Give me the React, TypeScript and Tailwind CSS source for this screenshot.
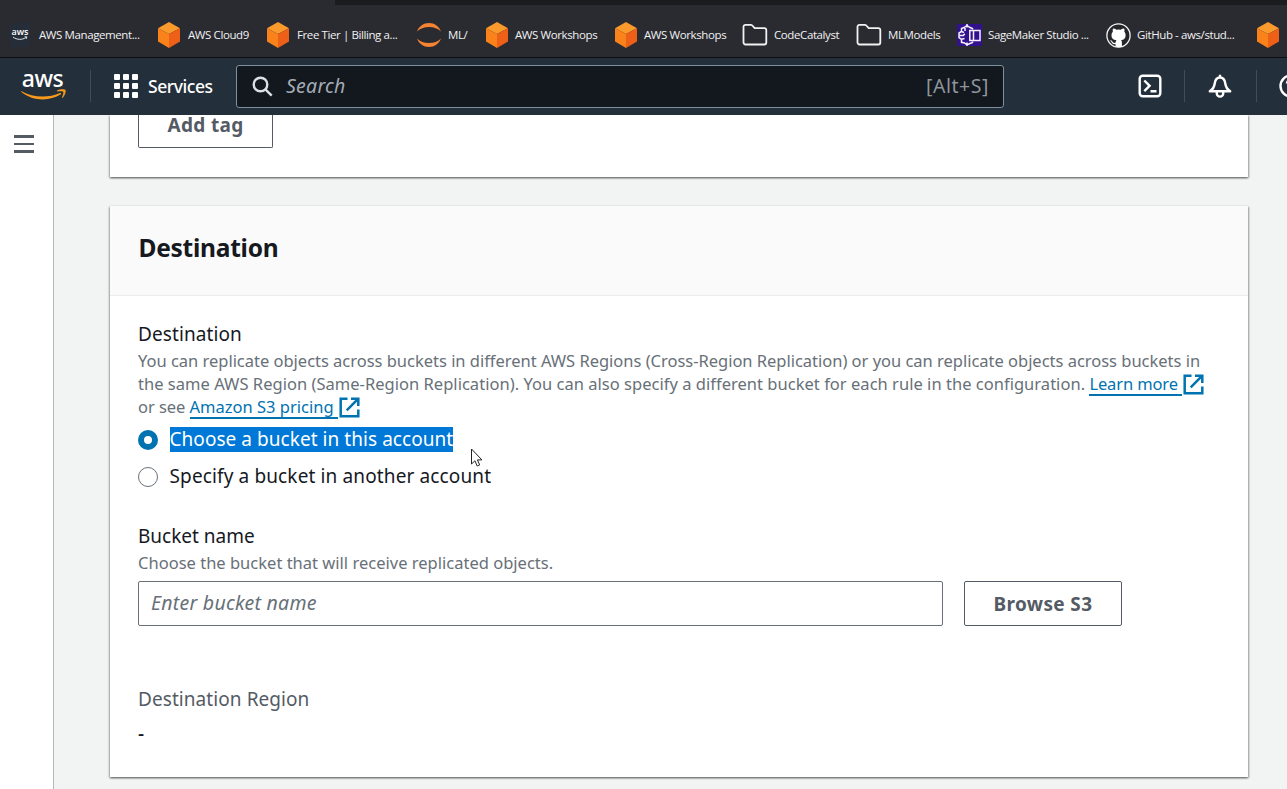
import type { ReactNode } from "react";

function Cube() {
  return (
    <svg width="24" height="26" viewBox="0 0 24 26" className="shrink-0">
      <path d="M12 0 23 6.2 12 12 1 6.2Z" fill="#fb9a2c" />
      <path d="M1 6.2 12 12V26L1 19.6Z" fill="#f9821b" />
      <path d="M23 6.2 12 12V26l11-6.4Z" fill="#ee6017" />
    </svg>
  );
}

function AwsMini() {
  return (
    <div className="flex h-6 w-5 shrink-0 flex-col items-center justify-center bg-[#252d38] pb-[2px]">
      <span className="text-[9px] leading-[8px] font-semibold text-white">aws</span>
      <svg width="16" height="5" viewBox="0 0 16 5" fill="none" stroke="#dfe5ea" strokeWidth="1">
        <path d="M1 1c4 3 9 3 13 .6M12.500 .8h2.300l-.5 2" />
      </svg>
    </div>
  );
}

function Jupyter() {
  return (
    <svg width="26" height="26" viewBox="0 0 26 26" className="shrink-0" fill="#f58331">
      <path d="M1 9.500C3.200 4 7.500 1 13 1s9.800 3 12 8.500C22 6.500 18 5 13 5S4 6.500 1 9.500Z" />
      <path d="M1 16.500c2.200 5.500 6.500 8.500 12 8.500s9.800-3 12-8.500c-3 3-7 4.500-12 4.500s-9-1.500-12-4.500Z" />
    </svg>
  );
}

function Folder() {
  return (
    <svg width="26" height="24" viewBox="0 0 26 24" className="shrink-0" fill="none" stroke="#f2f2f2" strokeWidth="1.800" strokeLinejoin="round">
      <path d="M1.500 19.500V3.800a2 2 0 0 1 2-2h5.200c.7 0 1.200.2 1.600.7l2.400 2.600h9.600a2 2 0 0 1 2 2v12.400a2 2 0 0 1-2 2H3.500a2 2 0 0 1-2-2Z" />
    </svg>
  );
}

function SageMaker() {
  return (
    <svg width="25" height="24" viewBox="0 0 25 24" className="shrink-0" fill="none" stroke="#f3effb" strokeWidth="1.500">
      <rect x="0" y="1" width="25" height="22" fill="#32128c" stroke="none" />
      <path d="M10 4.500V1M10 19.500V23M10 2.500 7 4.500 4.500 5.500v3L2 10v4.500l2.500 1.800v3L7.500 20l2.500 1.800M10 2.500l3 2 2.500 1v1M10 21.800l3-1.300 2.500-1v-1M4.500 8.500l2.500 1M2.500 12.500h3.800l1.500-1.800M4.500 16.300l3-.8M8 5v3" />
      <path d="M12.800 7.500H23v10H12.800ZM16.500 7.500v10" />
    </svg>
  );
}

function GitHubMark() {
  return (
    <svg width="25" height="25" viewBox="0 0 25 25" className="shrink-0">
      <circle cx="12.500" cy="12.500" r="11.600" fill="#24262b" stroke="#f5f5f5" strokeWidth="1.300" />
      <path
        fill="#fff"
        d="M7.100 5.600c1.300 0 2.400.5 3.400 1.200a12 12 0 0 1 4.200 0c1-.7 2.100-1.200 3.400-1.200.5 1.200.5 2.200.2 3.100.9 1 1.300 2 1.300 3.500 0 3.400-2 4.600-4.500 5 .6.600.8 1.300.8 2.200v4.200c-2.100.7-4.400.7-6.400 0v-2.500c-3 .5-3.600-1.200-4.200-2.300-.3-.5-.8-.9-1.200-1.300.8-.4 1.700.2 2.300 1 .8 1.300 1.600 1.700 3.100 1.300.1-1 .4-1.900.9-2.600-2.900-.4-4.900-1.600-4.900-5 0-1.500.5-2.500 1.400-3.500-.3-.9-.3-1.900.2-3.100Z"
      />
    </svg>
  );
}

function External() {
  return (
    <svg width="21" height="21" viewBox="0 0 21 21" fill="none" stroke="#0073b0" strokeWidth="2.500" className="ml-[1px] inline-block align-[-5px]">
      <path d="M8.500 1.700H1.700v17.600h17.600v-6.800" />
      <path d="M12 1.700h7.300v7.300M19.300 1.700 7.700 13.300" />
    </svg>
  );
}

function Bookmark({ icon, label, className }: { icon: ReactNode; label?: string; className: string }) {
  return (
    <div className={`flex h-7 shrink-0 items-center gap-[6px] ${className}`}>
      {icon}
      <span className="text-[11.5px] leading-4 tracking-[-0.4px] whitespace-nowrap text-[#f1f1f1]">{label}</span>
    </div>
  );
}

function BookmarksBar() {
  return (
    <div className="flex h-[58px] shrink-0 flex-col border-b border-[#0c0e11] bg-[#2a2b31] font-['Open_Sans',sans-serif]">
      <div className="ml-[335px] h-[5px] bg-[#1b1c20]" />
      <div className="mt-[16px] flex pl-[10px]">
        <Bookmark className="w-[147px]" icon={<div className="pr-[3px]"><AwsMini /></div>} label="AWS Management..." />
        <Bookmark className="w-[109px] gap-[7px]" icon={<Cube />} label="AWS Cloud9" />
        <Bookmark className="w-[150px] gap-[7px]" icon={<Cube />} label="Free Tier | Billing a..." />
        <Bookmark className="w-[69px]" icon={<Jupyter />} label="ML/" />
        <Bookmark className="w-[129px]" icon={<Cube />} label="AWS Workshops" />
        <Bookmark className="w-[128px]" icon={<Cube />} label="AWS Workshops" />
        <Bookmark className="w-[114px]" icon={<Folder />} label="CodeCatalyst" />
        <Bookmark className="w-[101px]" icon={<Folder />} label="MLModels" />
        <Bookmark className="w-[149px]" icon={<SageMaker />} label="SageMaker Studio ..." />
        <Bookmark className="w-[150px]" icon={<GitHubMark />} label="GitHub - aws/stud..." />
        <Bookmark className="w-[30px]" icon={<Cube />} />
      </div>
    </div>
  );
}

function NavBar() {
  return (
    <header className="flex h-[57px] shrink-0 items-center overflow-hidden bg-[#232f3b] pb-px">
      <div className="ml-[21px] flex w-[46px] shrink-0 flex-col items-center">
        <span className="mr-[3px] h-[18px] text-[23px] leading-[15px] font-medium tracking-[-0.4px] text-white">aws</span>
        <svg width="46" height="12" viewBox="0 0 46 12" fill="#f79a1c">
          <path d="M.5 2.200C11 8.500 27 9.500 39 4c1-.4 1.700.6.800 1.300C29 12.500 12 12.500.3 3c-.5-.5-.2-1 .2-.8Z" />
          <path d="M36 1.600c2.500-1.800 7.300-1.700 8.300-.9 1 .9.100 5.600-2.500 8-.5.400-.9.200-.7-.4.700-1.700 1.600-4.500 1.200-5.400-.5-.8-3.500-.7-5.700-.5-.7.100-.9-.5-.6-.8Z" />
        </svg>
      </div>
      <div className="ml-[23px] h-8 w-px shrink-0 bg-[#414d5c]" />
      <div className="ml-[23px] grid shrink-0 grid-cols-3 gap-[3px]">
        {Array.from({ length: 9 }, (_, i) => (
          <span key={i} className="size-[6px] rounded-[1px] bg-white" />
        ))}
      </div>
      <span className="ml-[10px] w-[88px] shrink-0 pb-px text-[17.5px] leading-6 font-medium tracking-[-0.45px] text-white">Services</span>
      <div className="flex h-[43px] w-[768px] shrink-0 items-center rounded-[3px] border border-[#7d8f9d] bg-[#13171e] pr-[14px] pl-[15px]">
        <svg width="21" height="21" viewBox="0 0 21 21" fill="none" stroke="#dce1e5" strokeWidth="2.400">
          <circle cx="8.500" cy="8.500" r="6.800" />
          <path d="m13.400 13.400 6.300 6.300" />
        </svg>
        <span className="ml-[13px] text-[19.5px] leading-6 tracking-[0.25px] text-[#a3acb3] italic">Search</span>
        <span className="ml-auto text-[19.5px] leading-6 tracking-[0.55px] text-[#8d959d]">[Alt+S]</span>
      </div>
      <svg width="24" height="24" viewBox="0 0 24 24" fill="none" stroke="#fff" strokeWidth="2.400" className="ml-[133.500px] shrink-0">
        <rect x="1.700" y="1.700" width="20.600" height="20.600" rx="3" />
        <path d="m6.300 6.500 5.300 5.300-5.300 5.300M12.500 17.200h6" />
      </svg>
      <div className="ml-[22.500px] h-8 w-px shrink-0 bg-[#414d5c]" />
      <svg width="24" height="24" viewBox="0 0 24 24" fill="none" stroke="#fff" strokeWidth="2.400" strokeLinejoin="round" className="ml-[22.500px] shrink-0">
        <path d="M1.800 17.300C5 15.300 6.300 13 6.700 9.500 7.200 5.800 9 3.500 12 3.500s4.800 2.300 5.300 6c.4 3.500 1.700 5.800 4.900 7.800ZM12 .8v2.700M8.800 17.500v1.900a3.200 3.200 0 0 0 6.400 0v-1.900" />
      </svg>
      <div className="ml-[24.500px] h-8 w-px shrink-0 bg-[#414d5c]" />
      <svg width="24" height="24" viewBox="0 0 24 24" fill="none" stroke="#fff" strokeWidth="2.400" className="ml-[22px] shrink-0">
        <circle cx="12" cy="12" r="10.500" />
        <path d="M8 9.500c0-5 8-5 8 0 0 2.800-4 2.800-4 5M12 16.500v2" />
      </svg>
    </header>
  );
}

const link = "inline-block border-b-2 border-[#0073b0] leading-[20px] text-[#0073b0]";
const cardShadow = "shadow-[0_1px_2px_0_rgba(0,10,15,0.4),1px_1px_2px_0_rgba(0,10,15,0.25),-1px_1px_2px_0_rgba(0,10,15,0.2)]";

function Destination() {
  return (
    <section className={`mt-[29px] h-[571px] w-[1138px] bg-white ${cardShadow}`}>
      <div className="flex h-[90px] items-center border-b border-[#eaeded] bg-[#fafafa] px-[29px] pb-[6px]">
        <h2 className="text-[24.5px] leading-8 font-bold tracking-[-0.25px] text-[#16191f]">Destination</h2>
      </div>
      <div className="px-[28.5px] pt-[24px] whitespace-nowrap">
        <h3 className="text-[19px] leading-7 tracking-[0.1px] text-[#16191f]">Destination</h3>
        <p className="mt-[1px] text-[16.5px] leading-[23px] text-[#687078]">
          <span className="block tracking-[-0.018px]">You can replicate objects across buckets in different AWS Regions (Cross-Region Replication) or you can replicate objects across buckets in</span>
          <span className="block h-[23px] tracking-[0.026px]">
            the same AWS Region (Same-Region Replication). You can also specify a different bucket for each rule in the configuration.{" "}
            <a className={`${link} tracking-[-0.13px]`}>Learn more&nbsp;</a>
            <External />
          </span>
          <span className="block h-[23px] tracking-[-0.05px]">
            or see <a className={`${link} tracking-[0px]`}>Amazon S3 pricing&nbsp;</a>
            <External />
          </span>
        </p>
        <div className="mt-[9px] flex h-[25px] items-center gap-[11.500px]">
          <span className="size-5 rounded-full border-[6px] border-[#0073b0] bg-white" />
          <span className="bg-[#0078d7] text-[19px] leading-[25px] tracking-[0.05px] text-white">Choose a bucket in this account</span>
        </div>
        <div className="mt-[12px] flex h-[25px] items-center gap-[11.500px]">
          <span className="size-5 rounded-full border-[1.500px] border-[#687078] bg-white" />
          <span className="text-[19px] leading-[25px] tracking-[0.13px] text-[#16191f]">Specify a bucket in another account</span>
        </div>
        <h3 className="mt-[33px] text-[19px] leading-7 text-[#16191f]">Bucket name</h3>
        <p className="mt-[1px] text-[16.5px] leading-[23px] tracking-[0.01px] text-[#687078]">Choose the bucket that will receive replicated objects.</p>
        <div className="mt-[7px] flex gap-[21px]">
          <div className="flex h-[45px] w-[805px] items-center rounded-[2px] border border-[#687078] px-[12px] pb-px text-[19.5px] tracking-[0.25px] text-[#687078] italic">Enter bucket name</div>
          <button className="flex h-[45px] w-[158px] items-center justify-center rounded-[2px] border border-[#545b64] text-[19px] leading-6 font-bold tracking-[0.35px] text-[#545b64]">Browse S3</button>
        </div>
        <div className="mt-[59px] text-[19px] leading-7 tracking-[0.07px] text-[#545b64]">Destination Region</div>
        <div className="mt-[6px] text-[19px] leading-7 font-medium text-[#16191f]">-</div>
      </div>
    </section>
  );
}

export default function App() {
  return (
    <div className="relative flex h-[789px] w-[1287px] flex-col overflow-hidden bg-[#f2f3f3] font-['Noto_Sans',sans-serif]">
      <BookmarksBar />
      <NavBar />
      <div className="flex min-h-0 flex-1 overflow-hidden">
        <aside className="flex w-[54px] shrink-0 flex-col border-r border-[#b4b8ba] bg-white pt-[20px] pl-[14px]">
          <div className="flex w-[20px] flex-col gap-[5px]">
            <span className="h-[2.500px] bg-[#545b64]" />
            <span className="h-[2.500px] bg-[#545b64]" />
            <span className="h-[2.500px] bg-[#545b64]" />
          </div>
        </aside>
        <main className="pl-[55.500px]">
          <section className={`h-[62px] w-[1138px] bg-white px-[28.500px] ${cardShadow}`}>
            <button className="flex h-[33px] w-[135px] items-start justify-center rounded-b-[2px] border border-t-0 border-[#545b64] text-[19px] leading-5 font-bold tracking-[0.35px] text-[#545b64]">
              Add tag
            </button>
          </section>
          <Destination />
        </main>
      </div>
      <svg width="14" height="20" viewBox="0 0 14 20" className="absolute top-[448px] left-[470px]" fill="#fff" stroke="#222" strokeWidth="1">
        <path d="M1.500 1v15l3.400-3.200 2.300 5.200 2.500-1.100-2.300-5h4.500Z" />
      </svg>
    </div>
  );
}
